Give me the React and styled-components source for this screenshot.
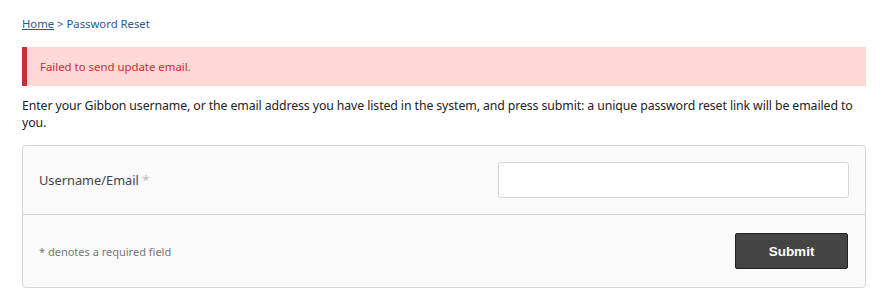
import styled, { createGlobalStyle } from 'styled-components';

const Global = createGlobalStyle`
    body {
        margin: 0;
        background: #fff;
        font-family: "Noto Sans", "Open Sans", sans-serif;
        color: #222;
    }
`

const Page = styled.div`
    padding: 16px 17px 0 22px;
`

const Crumbs = styled.div`
    font-size: 11.3px;
    color: #2a5a8a;
    a { color: #2a5a8a; text-decoration: underline; }
`

const Alert = styled.div`
    margin-top: 16px;
    height: 39px;
    display: flex;
    align-items: center;
    padding-left: 13px;
    background: #fed7d7;
    border-left: 5px solid #c53030;
    color: #c53030;
    font-size: 11.4px;
    box-sizing: border-box;
`

const Intro = styled.p`
    margin: 11px 0 0;
    font-size: 12.3px;
    letter-spacing: -0.1px;
    line-height: 17px;
    color: #222;
`

const Form = styled.div`
    margin-top: 14px;
    border: 1px solid #d6d6d6;
    border-radius: 4px;
    background: #fafafa;
`

const Row = styled.div`
    display: flex;
    align-items: center;
    justify-content: space-between;
    height: ${p => p.$h}px;
    padding: 0 16px 0 16px;
    border-top: ${p => p.$first ? 'none' : '1px solid #d6d6d6'};
`

const Label = styled.label`
    font-size: 12.8px;
    color: #444;
    span { color: #bbb; }
`

const Input = styled.input`
    width: 351px;
    height: 36px;
    box-sizing: border-box;
    border: 1px solid #d6d6d6;
    border-radius: 3px;
    background: #fff;
`

const Note = styled.span`
    font-size: 11px;
    color: #777;
`

const Button = styled.button`
    width: 113px;
    height: 36px;
    margin-right: 1px;
    background: #444;
    border: 1px solid #222;
    border-radius: 2px;
    color: #fff;
    font-family: "Liberation Sans", Arial, sans-serif;
    font-weight: bold;
    font-size: 13.5px;
    cursor: pointer;
`

export default function App() {
    return (
        <Page>
            <Global />
            <Crumbs><a href="#">Home</a> &gt; Password Reset</Crumbs>
            <Alert>Failed to send update email.</Alert>
            <Intro>Enter your Gibbon username, or the email address you have listed in the system, and press submit: a unique password reset link will be emailed to you.</Intro>
            <Form>
                <Row $h={68} $first>
                    <Label>Username/Email <span>*</span></Label>
                    <Input type="text" />
                </Row>
                <Row $h={72}>
                    <Note>* denotes a required field</Note>
                    <Button>Submit</Button>
                </Row>
            </Form>
        </Page>
    )
}
